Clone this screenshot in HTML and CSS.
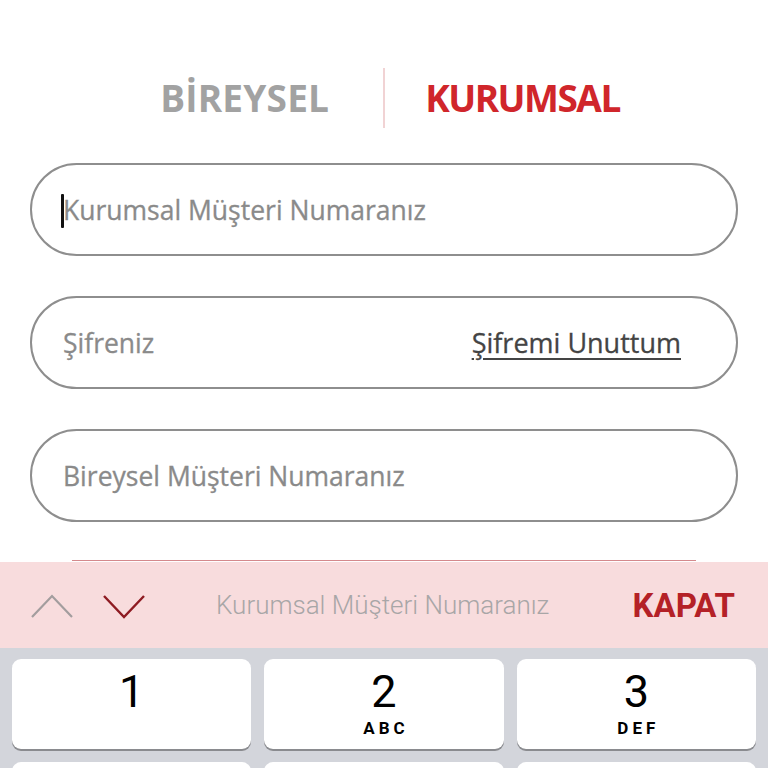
FILE: index.html
```html
<!DOCTYPE html>
<html lang="tr">
<head>
<meta charset="utf-8">
<link rel="stylesheet" href="styles.css">
</head>
<body>
<div class="page">
  <div class="tabs">
    <div class="tab tab-off">BİREYSEL</div>
    <div class="tab-divider"></div>
    <div class="tab tab-on">KURUMSAL</div>
  </div>
  <div class="form">
    <div class="field"><span class="caret"></span><span class="ph">Kurumsal Müşteri Numaranız</span></div>
    <div class="field"><span class="ph">Şifreniz</span><span class="forgot">Şifremi Unuttum</span></div>
    <div class="field"><span class="ph">Bireysel Müşteri Numaranız</span></div>
    <div class="submit"></div>
  </div>
  <div class="kb">
    <div class="accessory">
      <div class="arrows">
        <svg class="chev" width="42" height="26" viewBox="0 0 42 26"><polyline points="1,24 21,3 41,24" fill="none" stroke="#a39d9e" stroke-width="2.2"/></svg>
        <svg class="chev" width="42" height="26" viewBox="0 0 42 26"><polyline points="1,3 21,24 41,3" fill="none" stroke="#8e1b22" stroke-width="2.4"/></svg>
      </div>
      <div class="acc-label">Kurumsal Müşteri Numaranız</div>
      <div class="close">KAPAT</div>
    </div>
    <div class="keys">
      <div class="key"><span class="digit">1</span></div>
      <div class="key"><span class="digit">2</span><span class="letters">ABC</span></div>
      <div class="key"><span class="digit">3</span><span class="letters">DEF</span></div>
      <div class="key"></div>
      <div class="key"></div>
      <div class="key"></div>
    </div>
  </div>
</div>
</body>
</html>
```
FILE: styles.css
```css
html, body {
  margin: 0;
  padding: 0;
  background: #ffffff;
}
.page {
  position: relative;
  width: 768px;
  height: 768px;
  overflow: hidden;
  font-family: "Open Sans", "Noto Sans", sans-serif;
}
.tabs {
  display: flex;
  justify-content: center;
  align-items: center;
  margin-top: 68px;
  height: 60px;
  padding-left: 12px;
}
.tab {
  font-family: "Open Sans", sans-serif;
  font-weight: 700;
  font-size: 37px;
  line-height: 60px;
}
.tab-off {
  color: #a2a2a2;
  letter-spacing: 0.2px;
  padding-right: 54px;
}
.tab-on {
  color: #d0262b;
  letter-spacing: -1.5px;
  padding-left: 40px;
}
.tab-divider {
  width: 2px;
  height: 60px;
  background: #f1d3d4;
}
.form {
  display: flex;
  flex-direction: column;
  gap: 40px;
  margin: 35px 30px 0;
}
.field {
  height: 89px;
  border: 2px solid #8e8e8e;
  border-radius: 47px;
  display: flex;
  align-items: center;
  padding: 0 55px 0 31px;
  position: relative;
}
.ph {
  font-size: 26.5px;
  color: #8a8a8a;
  flex: 1;
  -webkit-text-stroke: 0.3px #8a8a8a;
}
.caret {
  position: absolute;
  left: 29px;
  top: 29px;
  width: 3px;
  height: 34px;
  background: #111;
  border-radius: 1px;
}
.forgot {
  font-size: 27px;
  color: #444444;
  -webkit-text-stroke: 0.3px #444444;
  text-decoration: underline;
  text-decoration-thickness: 2px;
  text-underline-offset: 5px;
}
.submit {
  height: 60px;
  margin: -2px 42px 0;
  border-top: 1px solid #d48a8d;
}
.kb {
  position: absolute;
  left: 0;
  top: 562px;
  width: 768px;
  height: 206px;
  background: #d3d5db;
}
.accessory {
  height: 86px;
  background: #f8dcdd;
  display: flex;
  align-items: center;
  padding: 0 33px 0 31px;
}
.arrows {
  display: flex;
  gap: 30px;
  align-items: center;
  margin-top: 2px;
}
.chev {
  display: block;
}
.acc-label {
  flex: 1;
  font-family: Roboto, sans-serif;
  font-weight: 300;
  font-size: 26px;
  color: #a8a6a7;
  padding-left: 71px;
}
.close {
  font-family: Roboto, sans-serif;
  font-weight: 700;
  font-size: 33px;
  color: #b42127;
}
.keys {
  display: grid;
  grid-template-columns: repeat(3, 1fr);
  column-gap: 13px;
  row-gap: 13px;
  padding: 11px 12px 0;
}
.key {
  height: 90px;
  background: #ffffff;
  border-radius: 9px;
  box-shadow: 0 2px 0 #8a8b8f;
  display: flex;
  flex-direction: column;
  align-items: center;
  font-family: Roboto, sans-serif;
  color: #000;
}
.digit {
  font-size: 45px;
  font-weight: 400;
  line-height: 1;
  margin-top: 10px;
}
.letters {
  font-size: 17px;
  font-weight: 700;
  letter-spacing: 4px;
  margin-left: 4px;
  margin-top: 6px;
  line-height: 1;
}
```
